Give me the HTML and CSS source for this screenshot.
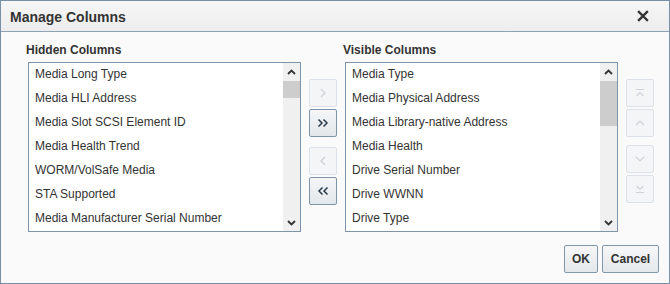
FILE: index.html
```html
<!DOCTYPE html>
<html>
<head>
<meta charset="utf-8">
<link rel="stylesheet" href="styles.css">
</head>
<body>
<div class="dialog">
  <div class="header">
    <span class="title">Manage Columns</span>
    <svg class="close" width="12" height="12" viewBox="0 0 12 12"><path d="M2 2 L10 10 M10 2 L2 10" stroke="#333" stroke-width="2.4" stroke-linecap="square" fill="none"/></svg>
  </div>
  <div class="content">
    <div class="label">Hidden Columns</div>
    <div></div>
    <div class="label">Visible Columns</div>
    <div></div>

    <div class="list">
      <div class="items">
        <div class="item">Media Long Type</div>
        <div class="item">Media HLI Address</div>
        <div class="item">Media Slot SCSI Element ID</div>
        <div class="item">Media Health Trend</div>
        <div class="item">WORM/VolSafe Media</div>
        <div class="item">STA Supported</div>
        <div class="item">Media Manufacturer Serial Number</div>
      </div>
      <div class="scrollbar">
        <div class="arrow"><svg width="9" height="6" viewBox="0 0 9 6"><path d="M1 5 L4.5 1.5 L8 5" stroke="#333" stroke-width="1.8" fill="none"/></svg></div>
        <div class="track"><div class="thumb thumb-small"></div></div>
        <div class="arrow"><svg width="9" height="6" viewBox="0 0 9 6"><path d="M1 1 L4.5 4.5 L8 1" stroke="#333" stroke-width="1.8" fill="none"/></svg></div>
      </div>
    </div>

    <div class="mid">
      <div class="btn disabled"><svg width="10" height="12" viewBox="0 0 10 12"><path d="M3 2 L7 6 L3 10" stroke="#cdd3d8" stroke-width="1.3" fill="none"/></svg></div>
      <div class="btn"><svg width="12" height="10" viewBox="0 0 12 10"><path d="M1.5 1.5 L5 5 L1.5 8.5 M6.5 1.5 L10 5 L6.5 8.5" stroke="#2b3b4a" stroke-width="1.5" fill="none"/></svg></div>
      <div class="btn disabled gap"><svg width="10" height="12" viewBox="0 0 10 12"><path d="M7 2 L3 6 L7 10" stroke="#cdd3d8" stroke-width="1.3" fill="none"/></svg></div>
      <div class="btn"><svg width="12" height="10" viewBox="0 0 12 10"><path d="M5.5 1.5 L2 5 L5.5 8.5 M10.5 1.5 L7 5 L10.5 8.5" stroke="#2b3b4a" stroke-width="1.5" fill="none"/></svg></div>
    </div>

    <div class="list">
      <div class="items">
        <div class="item">Media Type</div>
        <div class="item">Media Physical Address</div>
        <div class="item">Media Library-native Address</div>
        <div class="item">Media Health</div>
        <div class="item">Drive Serial Number</div>
        <div class="item">Drive WWNN</div>
        <div class="item">Drive Type</div>
      </div>
      <div class="scrollbar">
        <div class="arrow"><svg width="9" height="6" viewBox="0 0 9 6"><path d="M1 5 L4.5 1.5 L8 5" stroke="#333" stroke-width="1.8" fill="none"/></svg></div>
        <div class="track"><div class="thumb thumb-large"></div></div>
        <div class="arrow"><svg width="9" height="6" viewBox="0 0 9 6"><path d="M1 1 L4.5 4.5 L8 1" stroke="#333" stroke-width="1.8" fill="none"/></svg></div>
      </div>
    </div>

    <div class="side">
      <div class="btn disabled"><svg width="12" height="12" viewBox="0 0 12 12"><path d="M2 2.5 H10 M2.5 9 L6 5.5 L9.5 9" stroke="#cdd3d8" stroke-width="1.2" fill="none"/></svg></div>
      <div class="btn disabled"><svg width="12" height="12" viewBox="0 0 12 12"><path d="M2 8 L6 4 L10 8" stroke="#cdd3d8" stroke-width="1.2" fill="none"/></svg></div>
      <div class="btn disabled gap2"><svg width="12" height="12" viewBox="0 0 12 12"><path d="M2 4 L6 8 L10 4" stroke="#cdd3d8" stroke-width="1.2" fill="none"/></svg></div>
      <div class="btn disabled"><svg width="12" height="12" viewBox="0 0 12 12"><path d="M2.5 3 L6 6.5 L9.5 3 M2 9.5 H10" stroke="#cdd3d8" stroke-width="1.2" fill="none"/></svg></div>
    </div>
  </div>
  <div class="footer">
    <div class="pbtn ok">OK</div>
    <div class="pbtn cancel">Cancel</div>
  </div>
</div>
</body>
</html>
```

FILE: styles.css
```css
html, body {
  margin: 0;
  padding: 0;
}
body {
  font-family: "Liberation Sans", Arial, sans-serif;
  color: #333;
  background: #fafafa;
}
.dialog {
  box-sizing: border-box;
  width: 670px;
  height: 284px;
  border: 1px solid #7590a9;
  background: #fafafa;
  display: flex;
  flex-direction: column;
}
.header {
  height: 30px;
  border-bottom: 1px solid #8fa2b3;
  background: linear-gradient(#f6f6f6, #ededed);
  display: flex;
  align-items: center;
  justify-content: space-between;
  padding: 0 20px 0 9px;
}
.title {
  font-weight: bold;
  font-size: 14px;
  color: #333;
  position: relative;
  top: 1px;
}
.close {
  display: block;
}
.content {
  padding: 10px 0 0 27px;
  display: grid;
  grid-template-columns: 273px 28px 273px 28px;
  grid-template-rows: 16px 170px;
  column-gap: 8px;
  row-gap: 4px;
}
.label {
  font-size: 12px;
  font-weight: bold;
  line-height: 16px;
  margin-left: -2px;
  color: #333;
  white-space: nowrap;
}
.list {
  box-sizing: border-box;
  border: 1px solid #7e94a8;
  background: #fff;
  display: flex;
  overflow: hidden;
}
.items {
  flex: 1;
}
.item {
  height: 24px;
  line-height: 23px;
  font-size: 12px;
  padding-left: 6px;
  color: #333;
  white-space: nowrap;
}
.scrollbar {
  width: 17px;
  background: #f0f0f0;
  display: flex;
  flex-direction: column;
}
.arrow {
  height: 17px;
  display: flex;
  align-items: center;
  justify-content: center;
}
.arrow svg {
  display: block;
}
.track {
  flex: 1;
}
.thumb {
  background: #cdcdcd;
  margin-top: 1px;
}
.thumb-small {
  height: 17px;
}
.thumb-large {
  height: 45px;
}
.mid, .side {
  display: flex;
  flex-direction: column;
  padding-top: 17px;
}
.btn {
  box-sizing: border-box;
  width: 28px;
  height: 28px;
  margin-bottom: 2px;
  border: 1px solid #7e94a8;
  border-radius: 2px;
  background: linear-gradient(#f4f6f8, #e3e7eb);
  display: flex;
  align-items: center;
  justify-content: center;
}
.btn.disabled {
  border-color: #dce2e7;
  background: #f3f5f6;
}
.mid .gap {
  margin-top: 8px;
}
.side .gap2 {
  margin-top: 6px;
}
.footer {
  margin-top: 13px;
  display: flex;
  justify-content: flex-end;
  gap: 4px;
  padding-right: 10px;
}
.pbtn {
  box-sizing: border-box;
  height: 28px;
  border: 1px solid #8297aa;
  border-radius: 2px;
  background: linear-gradient(#f6f7f9, #e4e8eb);
  font-size: 12px;
  font-weight: bold;
  color: #333;
  display: flex;
  align-items: center;
  justify-content: center;
}
.ok {
  width: 34px;
}
.cancel {
  width: 57px;
}
```
